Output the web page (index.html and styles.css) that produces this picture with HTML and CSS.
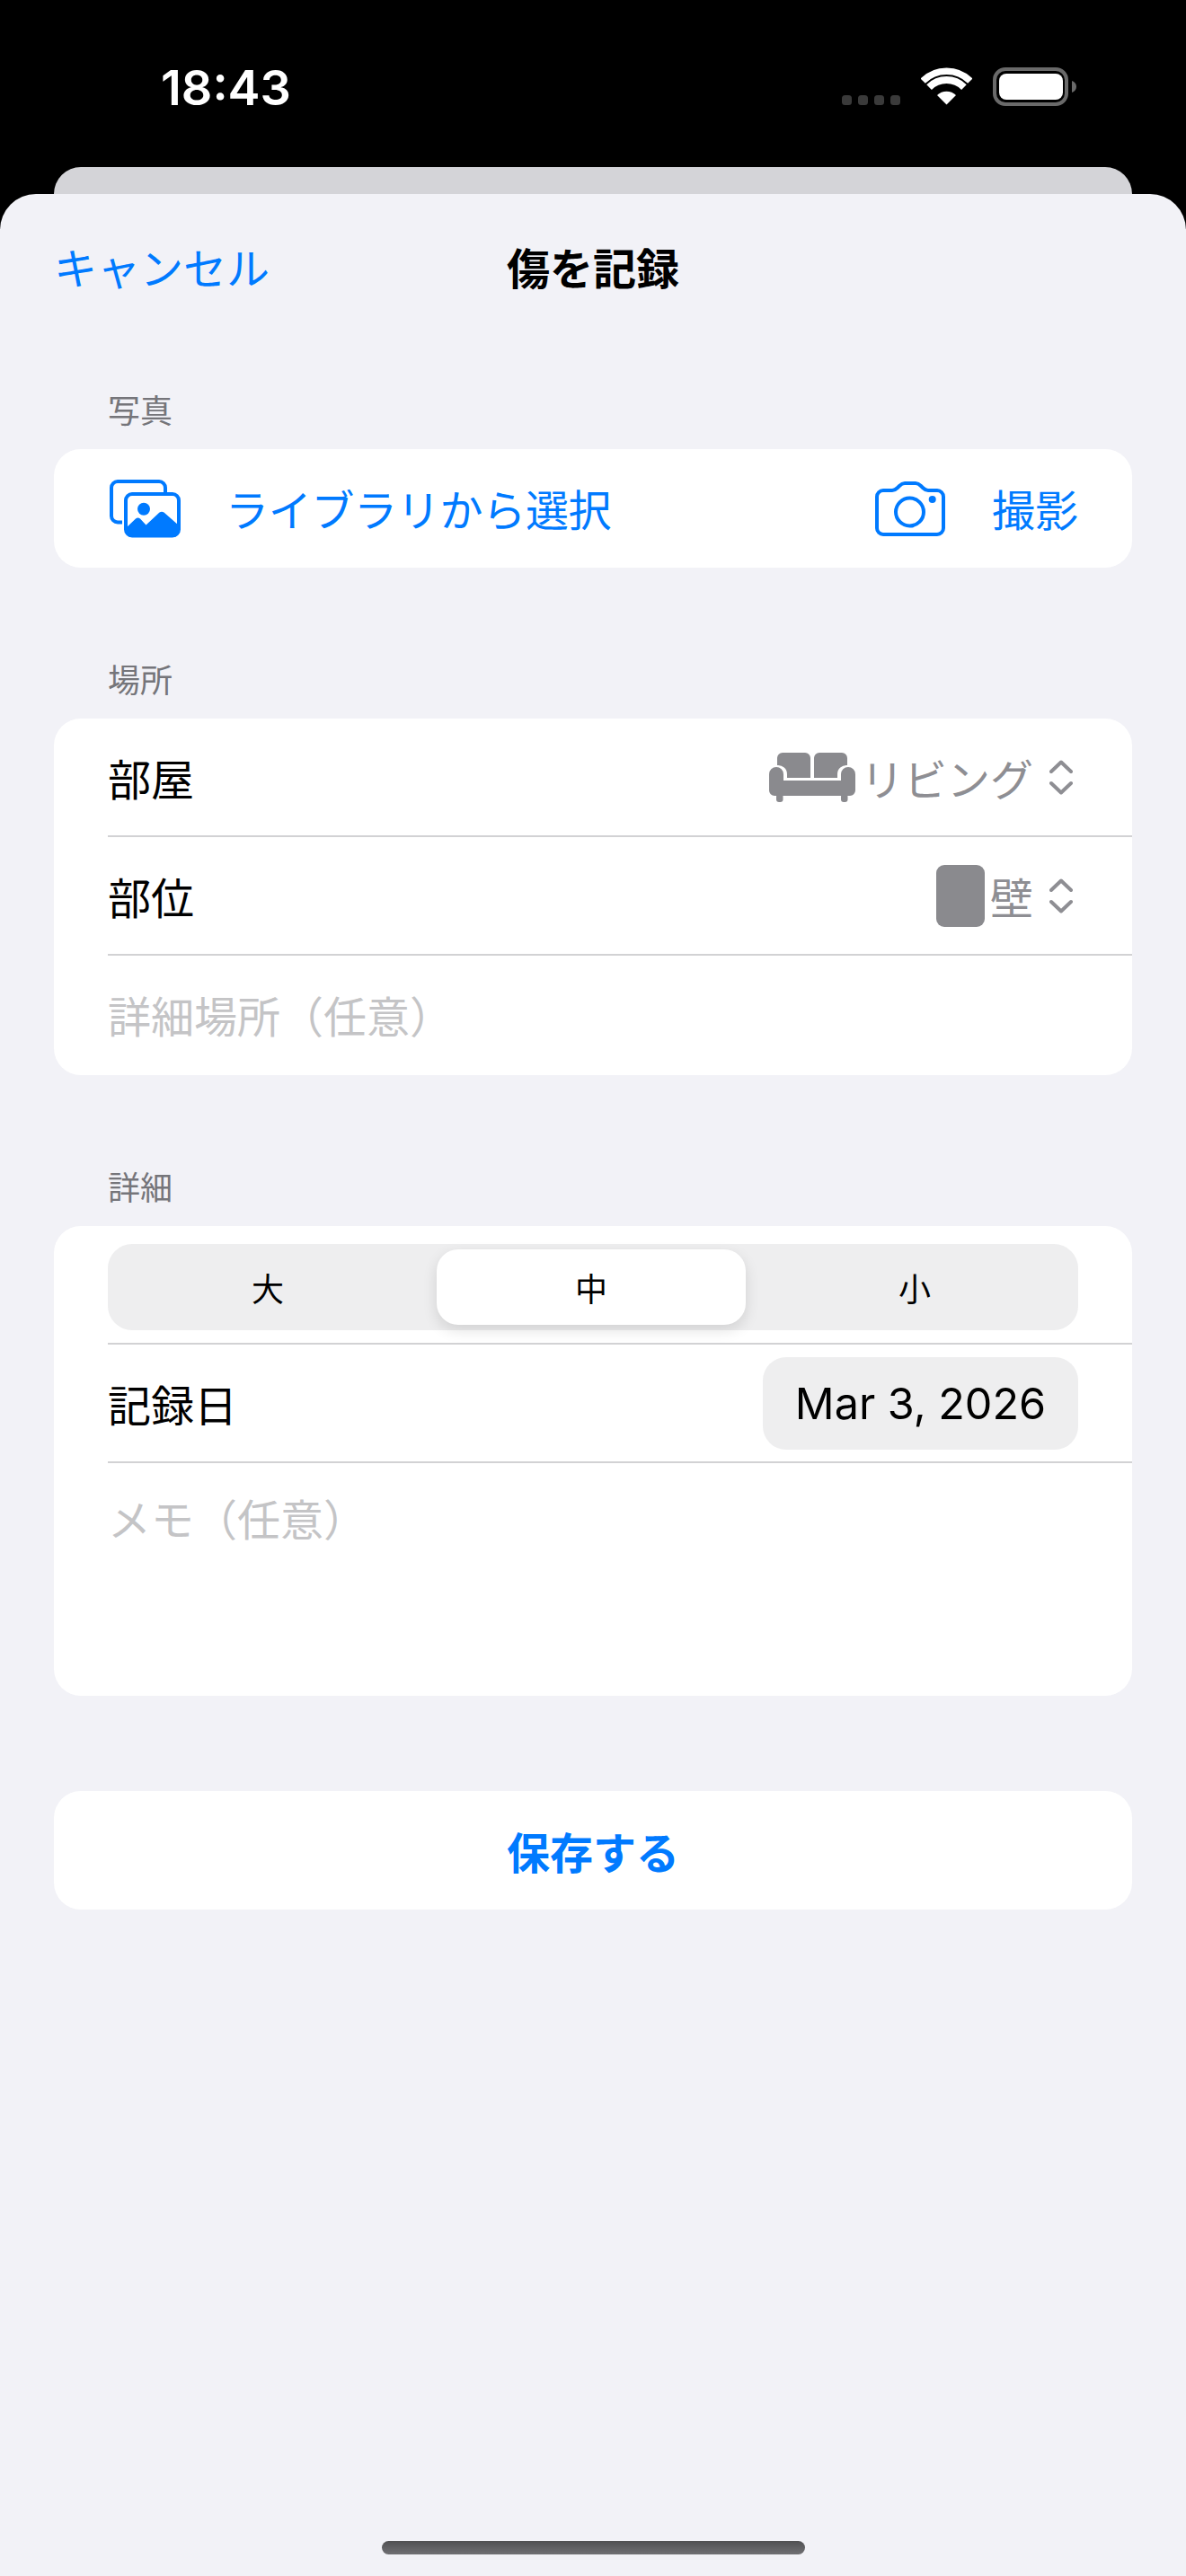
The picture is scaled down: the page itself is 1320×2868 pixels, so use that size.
FILE: index.html
```html
<!DOCTYPE html>
<html lang="ja">
<head>
  <meta charset="UTF-8">
  <meta name="viewport" content="width=device-width, initial-scale=1.0">
  <title>傷を記録</title>
  <link rel="stylesheet" href="styles.css">
</head>
<body>
<div class="status-bar">
  <span class="time">18:43</span>
  <div class="status-icons">
    <svg class="signal" width="65" height="11" viewBox="0 0 65 11" fill="#3a3a3a">
      <rect x="0" width="11" height="11" rx="3.5"/>
      <rect x="18" width="11" height="11" rx="3.5"/>
      <rect x="36" width="11" height="11" rx="3.5"/>
      <rect x="54" width="11" height="11" rx="3.5"/>
    </svg>
    <svg class="wifi" width="57" height="42" viewBox="0 0 57 42" fill="none" stroke="#fff">
      <path stroke-width="7.5" d="M2.2 15.200A37.250 37.250 0 0 1 54.800 15.200"/>
      <path stroke-width="8" d="M9.100 22.100A27.500 27.500 0 0 1 47.900 22.100"/>
      <path fill="#fff" stroke="none" d="M28.500 41.500L18 31A14.800 14.800 0 0 1 39 31Z"/>
    </svg>
    <svg class="battery" width="93" height="43" viewBox="0 0 93 43">
      <rect x="2" y="2" width="80" height="39" rx="12" fill="none" stroke="#6a6a6a" stroke-width="4"/>
      <rect x="7" y="7" width="71" height="29" rx="8" fill="#fff"/>
      <path d="M88 15c3 1 5 3.500 5 6.500s-2 5.500-5 6.500z" fill="#6a6a6a"/>
    </svg>
  </div>
</div>

<div class="back-card"></div>

<div class="sheet">
  <div class="nav">
    <span class="nav-cancel">キャンセル</span>
    <span class="nav-title">傷を記録</span>
  </div>

  <div class="section">
    <div class="section-label">写真</div>
    <div class="card photo-row">
      <div class="photo-btn library">
        <svg width="79" height="65" viewBox="0 0 79 65">
          <path d="M14 47.500H9a7 7 0 0 1-7-7V9a7 7 0 0 1 7-7H55a7 7 0 0 1 7 7v5" fill="none" stroke="#007aff" stroke-width="4"/>
          <rect x="18" y="16" width="59" height="46.500" rx="7" fill="none" stroke="#007aff" stroke-width="4"/>
          <path d="M18 54l11-10.500q2.500-2 5 0l6.500 7 15-14q2.500-1.500 5 0L77 51v7a6 6 0 0 1-6 6H24a6 6 0 0 1-6-6z" fill="#007aff"/>
          <ellipse cx="38" cy="32.700" rx="7" ry="7" fill="#007aff"/>
        </svg>
        <span>ライブラリから選択</span>
      </div>
      <div class="photo-btn camera">
        <svg width="78" height="61" viewBox="0 0 78 61">
          <path d="M9 10H19c3 0 4-1 6-3l2-2c2-2 3-3 6-3h12c3 0 4 1 6 3l2 2c2 2 3 3 6 3h10a7 7 0 0 1 7 7v35a7 7 0 0 1-7 7H9a7 7 0 0 1-7-7V17a7 7 0 0 1 7-7z" fill="none" stroke="#007aff" stroke-width="4"/>
          <circle cx="38.500" cy="34" r="15.500" fill="none" stroke="#007aff" stroke-width="4"/>
          <circle cx="63.700" cy="20" r="4" fill="#007aff"/>
        </svg>
        <span>撮影</span>
      </div>
    </div>
  </div>

  <div class="section">
    <div class="section-label">場所</div>
    <div class="card">
      <div class="row">
        <span>部屋</span>
        <div class="picker">
          <svg width="96" height="55" viewBox="0 0 96 55" fill="#8a8a8e">
            <path d="M9 14V6a6 6 0 0 1 6-6H40a6 6 0 0 1 6 6V28H20V24a10 10 0 0 0-11-10z"/>
            <path d="M50 28V6a6 6 0 0 1 6-6H81a6 6 0 0 1 6 6v8a10 10 0 0 0-11 10v4z"/>
            <path d="M0 24a8 8 0 0 1 16 0v7H80v-7a8 8 0 0 1 16 0V42a6 6 0 0 1-6 6H6a6 6 0 0 1-6-6z"/>
            <rect x="8" y="46" width="7.500" height="9" rx="3"/>
            <rect x="80" y="46" width="7.500" height="9" rx="3"/>
          </svg>
          <span class="picker-text">リビング</span>
          <svg class="chevrons" width="26" height="39" viewBox="0 0 26 39" fill="none" stroke="#8e8e93" stroke-width="4" stroke-linecap="round" stroke-linejoin="round">
            <path d="M2 13L13 2.500 24 13"/>
            <path d="M2 26L13 36.500 24 26"/>
          </svg>
        </div>
      </div>
      <div class="row">
        <span>部位</span>
        <div class="picker">
          <div class="wall-swatch"></div>
          <span class="picker-text">壁</span>
          <svg class="chevrons" width="26" height="39" viewBox="0 0 26 39" fill="none" stroke="#8e8e93" stroke-width="4" stroke-linecap="round" stroke-linejoin="round">
            <path d="M2 13L13 2.500 24 13"/>
            <path d="M2 26L13 36.500 24 26"/>
          </svg>
        </div>
      </div>
      <div class="row row-last placeholder">詳細場所（任意）</div>
    </div>
  </div>

  <div class="section">
    <div class="section-label">詳細</div>
    <div class="card">
      <div class="seg-row">
        <div class="seg">
          <div class="seg-item">大</div>
          <div class="seg-item active">中</div>
          <div class="seg-item">小</div>
        </div>
      </div>
      <div class="row">
        <span>記録日</span>
        <div class="date-pill">Mar 3, 2026</div>
      </div>
      <div class="memo placeholder">メモ（任意）</div>
    </div>
  </div>

  <div class="card save">保存する</div>

  <div class="home-indicator"></div>
</div>
</body>
</html>
```

FILE: styles.css
```css
* {
  box-sizing: border-box;
}
body {
  margin: 0;
  height: 2868px;
  overflow: hidden;
  display: flex;
  flex-direction: column;
  background-color: #000;
  font-family: Inter, "Noto Sans CJK JP", sans-serif;
  font-size: 48px;
  color: #000;
}
.status-bar {
  height: 186px;
  flex: none;
  display: flex;
  justify-content: space-between;
  padding: 75px 122px 0 179px;
}
.time {
  font-size: 54px;
  font-weight: 600;
  line-height: 46px;
  color: #fff;
}
.status-icons {
  display: flex;
  align-items: flex-start;
  height: 43px;
}
.signal {
  margin-top: 31px;
  margin-right: 23px;
}
.wifi {
  margin-right: 23px;
}
.back-card {
  height: 30px;
  flex: none;
  margin: 0 60px;
  background-color: #d4d4d8;
  border-radius: 30px 30px 0 0;
}
.sheet {
  flex: 1;
  display: flex;
  flex-direction: column;
  padding: 0 60px;
  background-color: #f2f2f7;
  border-radius: 40px 40px 0 0;
}
.nav {
  position: relative;
  height: 64px;
  margin-top: 52px;
  display: flex;
  align-items: center;
  justify-content: center;
  line-height: 64px;
}
.nav-cancel {
  position: absolute;
  left: 0;
  color: #007aff;
}
.nav-title {
  font-weight: 700;
}
.section {
  margin-top: 102px;
}
.section-label {
  height: 48px;
  margin-bottom: 18px;
  padding-left: 60px;
  font-size: 36px;
  line-height: 48px;
  color: #75757a;
}
.card {
  padding-left: 60px;
  background-color: #fff;
  border-radius: 30px;
}
.photo-row {
  height: 132px;
  padding: 0 60px 0 62px;
  display: flex;
  align-items: center;
  justify-content: space-between;
  color: #007aff;
}
.photo-btn {
  display: flex;
  align-items: center;
}
.photo-btn span {
  padding-bottom: 3px;
}
.library {
  gap: 50px;
}
.library span {
  letter-spacing: -0.3px;
}
.camera {
  gap: 52px;
}
.row {
  height: 132px;
  padding-right: 60px;
  display: flex;
  align-items: center;
  justify-content: space-between;
  border-bottom: 2px solid #d2d2d4;
}
.row-last {
  height: 133px;
  padding-bottom: 3px;
  border-bottom: none;
}
.placeholder {
  color: #c4c4c6;
}
.picker {
  display: flex;
  align-items: center;
  gap: 6px;
  color: #8e8e93;
}
.chevrons {
  margin: 0 6px 0 12px;
}
.wall-swatch {
  width: 54px;
  height: 69px;
  background-color: #8a8a8e;
  border-radius: 9px;
}
.seg-row {
  height: 132px;
  padding: 20px 60px 0 0;
  border-bottom: 2px solid #d2d2d4;
}
.seg {
  height: 96px;
  padding: 6px;
  display: flex;
  gap: 16px;
  background-color: #eeeeef;
  border-radius: 27px;
}
.seg-item {
  width: 344px;
  display: flex;
  align-items: center;
  justify-content: center;
  font-size: 36px;
  border-radius: 24px;
}
.seg-item.active {
  background-color: #fff;
  box-shadow: 0 6px 16px rgba(0, 0, 0, 0.12);
}
.date-pill {
  width: 351px;
  height: 103px;
  display: flex;
  align-items: center;
  justify-content: center;
  font-size: 48.5px;
  background-color: #eeeeef;
  border-radius: 26px;
}
.memo {
  height: 259px;
  padding-top: 34px;
  line-height: 60px;
}
.save {
  height: 132px;
  margin-top: 106px;
  padding-left: 0;
  display: flex;
  align-items: center;
  justify-content: center;
  font-weight: 700;
  color: #007aff;
}
.home-indicator {
  width: 471px;
  height: 15px;
  margin: auto auto 24px;
  background: linear-gradient(#505052, #707074);
  border-radius: 8px;
}
```
